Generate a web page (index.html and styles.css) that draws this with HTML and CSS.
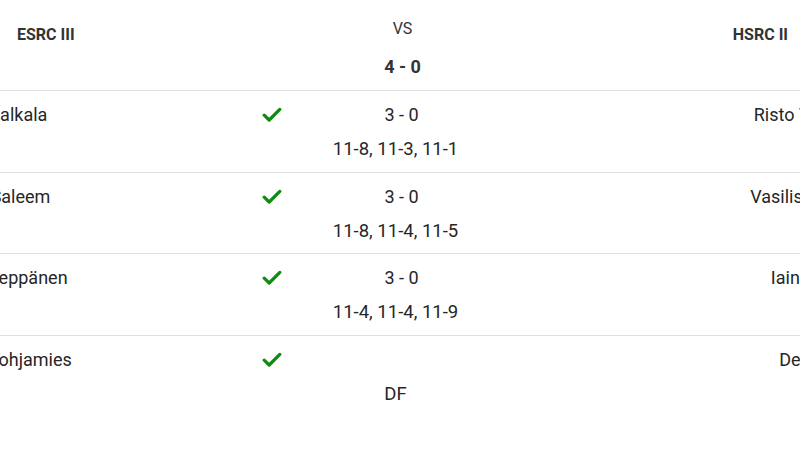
FILE: index.html
```html
<!DOCTYPE html>
<html lang="en">
<head>
<meta charset="utf-8">
<title>ESRC III vs HSRC II</title>
<link rel="stylesheet" href="styles.css">
</head>
<body>
<div class="page">
  <header class="match-head">
    <div class="team team-home">ESRC III</div>
    <div class="versus">
      <div class="vs-label">VS</div>
      <div class="total">4 - 0</div>
    </div>
    <div class="team team-away">HSRC II</div>
  </header>
  <div class="board-wrap">
    <div class="board">
      <div class="game">
        <div class="player home">Jussi Halkala</div>
        <div class="mark"><svg class="check" viewBox="0 0 20 16"><polyline points="2.2,8.2 7.2,13 17.8,2.4"/></svg></div>
        <div class="score">3 - 0</div>
        <div class="sets">11-8, 11-3, 11-1</div>
        <div class="player away">Risto Vuorela</div>
      </div>
      <div class="game">
        <div class="player home">Imran Saleem</div>
        <div class="mark"><svg class="check" viewBox="0 0 20 16"><polyline points="2.2,8.2 7.2,13 17.8,2.4"/></svg></div>
        <div class="score">3 - 0</div>
        <div class="sets">11-8, 11-4, 11-5</div>
        <div class="player away">Vasilis Petrou</div>
      </div>
      <div class="game">
        <div class="player home">Jouni Leppänen</div>
        <div class="mark"><svg class="check" viewBox="0 0 20 16"><polyline points="2.2,8.2 7.2,13 17.8,2.4"/></svg></div>
        <div class="score">3 - 0</div>
        <div class="sets">11-4, 11-4, 11-9</div>
        <div class="player away">Iain Murray</div>
      </div>
      <div class="game">
        <div class="player home">Jussi Pohjamies</div>
        <div class="mark"><svg class="check" viewBox="0 0 20 16"><polyline points="2.2,8.2 7.2,13 17.8,2.4"/></svg></div>
        <div class="score"></div>
        <div class="sets">DF</div>
        <div class="player away">Dean Reid</div>
      </div>
    </div>
  </div>
</div>
</body>
</html>
```
FILE: styles.css
```css
* { box-sizing: border-box; }

html, body {
  margin: 0;
  padding: 0;
  background: #ffffff;
}

body {
  width: 800px;
  height: 450px;
  overflow: hidden;
  font-family: Roboto, "Liberation Sans", sans-serif;
  color: #212121;
}

.page {
  width: 800px;
}

.match-head {
  display: grid;
  grid-template-columns: 1fr auto 1fr;
  height: 91px;
  padding: 0 12px 0 17px;
  border-bottom: 1px solid #e0e0e0;
}

.team {
  padding-top: 25px;
  font-size: 16px;
  line-height: 20px;
  font-weight: 700;
  color: #333333;
}

.team-away {
  text-align: right;
}

.versus {
  display: flex;
  flex-direction: column;
  align-items: center;
  padding-top: 19px;
}

.vs-label {
  font-size: 16px;
  line-height: 20px;
  color: #333333;
}

.total {
  margin-top: 16px;
  font-size: 18px;
  line-height: 24px;
  font-weight: 700;
  color: #333333;
}

.board-wrap {
  display: flex;
  justify-content: center;
  width: 800px;
}

.board {
  flex: 0 0 920px;
  width: 920px;
}

.game {
  display: grid;
  grid-template-columns: 1fr 24px 232px 24px 1fr;
  grid-template-rows: 24px 24px;
  row-gap: 10px;
  padding: 12px 0 10.7px;
  border-bottom: 1px solid #e0e0e0;
  font-size: 18px;
  line-height: 24px;
  color: #262626;
}

.game:last-child {
  border-bottom: none;
}

.player {
  grid-row: 1;
  white-space: nowrap;
}

.player.home {
  grid-column: 1;
  text-align: left;
}

.player.away {
  grid-column: 5;
  text-align: right;
}

.mark {
  grid-row: 1;
  grid-column: 2;
  display: flex;
  align-items: center;
  justify-content: center;
}

.check {
  width: 20px;
  height: 16px;
  flex: none;
}

.check polyline {
  fill: none;
  stroke: #108a10;
  stroke-width: 3.2;
  stroke-linecap: round;
  stroke-linejoin: round;
}

.score {
  grid-row: 1;
  grid-column: 3;
  padding-left: 3px;
  text-align: center;
}

.sets {
  grid-row: 2;
  grid-column: 3;
  padding-right: 9px;
  font-size: 18.5px;
  text-align: center;
}
```
